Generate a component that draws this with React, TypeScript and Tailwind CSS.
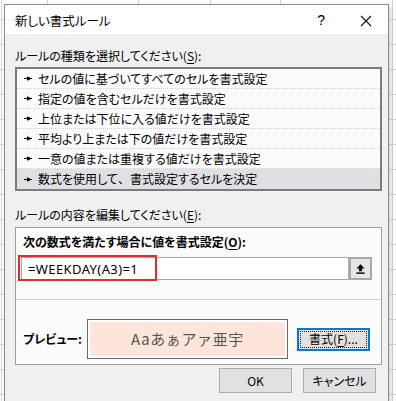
import React from "react";

const jp = "font-['Noto_Sans_CJK_JP','Noto_Sans',sans-serif] [font-feature-settings:'palt']";

const items: React.ReactNode[] = [
  "セルの値に基づいてすべてのセルを書式設定",
  "指定の値を含むセルだけを書式設定",
  "上位または下位に入る値だけを書式設定",
  "平均より上または下の値だけを書式設定",
  "一意の値または重複する値だけを書式設定",
  <>
    数式を使用して<span className="[font-feature-settings:normal]">、</span>書式設定するセルを決定
  </>,
];

function Pointer() {
  return (
    <svg width="8" height="5" viewBox="0 0 8 5" className="shrink-0">
      <rect x="0" y="2" width="8" height="1" fill="#000" />
      <path d="M3 0.2 L8 2.5 L3 4.8 Z" fill="#000" />
    </svg>
  );
}

export default function App() {
  return (
    <div
      className={`w-[396px] h-[401px] overflow-hidden bg-white pt-[4px] pl-[4px] text-[12px] text-black ${jp} [background-image:repeating-linear-gradient(180deg,transparent_0_19px,#d6d6d6_19px_20px,transparent_20px_25px),linear-gradient(90deg,transparent_0_1px,#d6d6d6_1px_2px,transparent_2px_47px,#d6d6d6_47px_48px,transparent_48px_138px,#d6d6d6_138px_139px,transparent_139px_210px,#d6d6d6_210px_211px,transparent_211px_280px,#d6d6d6_280px_281px,transparent_281px_392px,#d6d6d6_392px_393px,transparent_393px)]`}
    >
      <div className="w-[385px] h-[400px] border border-[#8a8a8a] bg-[#f0f0f0] flex flex-col [box-shadow:2px_2px_5px_rgba(0,0,0,0.18)]">
        {/* title bar */}
        <div className="h-[29px] bg-white flex items-center pl-[10px] shrink-0">
          <span className="text-[12.5px] leading-[16px] mt-[2px]">新しい書式ルール</span>
          <div className="flex-1" />
          <span className="font-['Liberation_Sans',sans-serif] text-[14px] leading-[16px] mr-[35px] mt-[1px]">?</span>
          <svg width="12" height="12" viewBox="0 0 12 12" className="mr-[16px] mt-[2px]">
            <path d="M1 1 L11 11 M11 1 L1 11" stroke="#111" strokeWidth="1.1" />
          </svg>
        </div>

        {/* body */}
        <div className="flex flex-col pl-[10px] pt-[14px]">
          <div className="leading-[16px] h-[16px]">
            ルールの種類を選択してください(<span className="underline underline-offset-2">S</span>):
          </div>
          <div className="mt-[3px] w-[367px] h-[124px] border-2 border-[#7c7c7c] bg-[#fbfbfb] flex flex-col">
            {items.map((t, i) => (
              <div
                key={i}
                className={`h-[20px] flex items-center pl-[7px] gap-[6px] ${
                  i < 5 ? "border-b border-dotted border-[#d0d0d0]" : "bg-[#dfdfe4]"
                }`}
              >
                <Pointer />
                <span className="leading-[16px] whitespace-nowrap">{t}</span>
              </div>
            ))}
          </div>

          <div className="mt-[16px] leading-[16px] h-[16px]">
            ルールの内容を編集してください(<span className="underline underline-offset-2">E</span>):
          </div>

          <div className="mt-[4px] w-[367px] h-[138px] border border-[#a0a0a0] bg-[#fbfbfb] flex flex-col">
            <div className="mt-[6px] pl-[7px] leading-[16px] h-[16px] font-bold">
              次の数式を満たす場合に値を書式設定(<span className="underline underline-offset-2">O</span>):
            </div>
            <div className="mt-[7px] ml-[5px] flex relative">
              <div className="w-[328px] h-[23px] border border-[#a8a8a8] bg-white flex items-center pl-[6px]">
                <span className="font-['Noto_Sans',sans-serif] text-[13px] leading-[16px] tracking-[0.4px]">
                  =WEEKDAY(A3)=1
                </span>
              </div>
              <div className="w-[23px] h-[23px] border-2 border-[#a8a8a8] bg-[#e6e6e6] flex items-center justify-center">
                <svg width="9" height="10" viewBox="0 0 9 10">
                  <path d="M4.5 0.3 L8.6 4.6 H6 V7.2 H3 V4.6 H0.4 Z" fill="#000" />
                  <rect x="0.3" y="8.4" width="8.4" height="1.4" fill="#000" />
                </svg>
              </div>
              <div className="absolute left-[-3px] top-[-2px] w-[139px] h-[26px] border-2 border-[#e42a2a]" />
            </div>
            <div className="mt-[19px] h-px bg-[#cfcfcf]" />
            <div className="mt-[19px] flex items-center pl-[7px]">
              <span className="font-bold leading-[16px] w-[64px]">プレビュー:</span>
              <div className="w-[201px] h-[40px] border border-[#6a6a6a] bg-white p-[2px]">
                <div className="w-full h-full bg-[#fde5d9] flex items-center justify-center">
                  <span className="text-[15px] leading-[18px] text-[#555] [font-feature-settings:normal] tracking-[0.6px]">
                    Aaあぁアァ亜宇
                  </span>
                </div>
              </div>
              <div className="ml-[9px] w-[73px] h-[23px] border-2 border-[#0078d7] bg-[#e1e1e1] p-px">
                <div className="w-full h-full border border-dotted border-[#222] flex items-center justify-center">
                  <span className="leading-[16px]">
                    書式(<span className="underline underline-offset-2">F</span>)...
                  </span>
                </div>
              </div>
            </div>
          </div>

          <div className="mt-[3px] flex justify-end gap-[11px] pr-[12px]">
            <div className="w-[73px] h-[25px] border border-[#adadad] bg-[#e1e1e1] flex items-center justify-center leading-[16px]">
              OK
            </div>
            <div className="w-[73px] h-[25px] border border-[#adadad] bg-[#e1e1e1] flex items-center justify-center leading-[16px]">
              キャンセル
            </div>
          </div>
        </div>
      </div>
    </div>
  );
}
